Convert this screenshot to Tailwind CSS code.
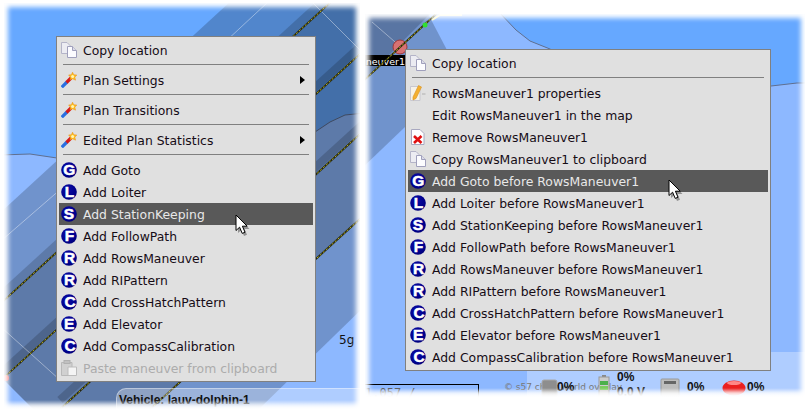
<!DOCTYPE html>
<html><head><meta charset="utf-8">
<script src="https://cdn.jsdelivr.net/npm/@tailwindcss/browser@4"></script>
</head>
<body class="bg-white">
<svg class="absolute w-0 h-0" aria-hidden="true">
<defs>
<radialGradient id="ballg" cx="40%" cy="35%" r="75%"><stop offset="0" stop-color="#0c0ca8"/><stop offset="0.7" stop-color="#00008a"/><stop offset="1" stop-color="#000070"/></radialGradient>
<symbol id="copy" viewBox="0 0 16 16"><path d="M.5 .5H6L9 3.5V11.5H.5Z" fill="#ececf2" stroke="#b4b4c8"/><path d="M6.5 4.5H11.5L15.5 8.5V15.5H6.5Z" fill="#fcfcff" stroke="#a0a0bc"/><path d="M11.5 4.5V8.5H15.5" fill="#dcdce8" stroke="#a0a0bc"/></symbol>
<symbol id="wand" viewBox="0 0 16 16"><path d="M.8 15.2L6 10" stroke="#2a6fe0" stroke-width="3.2"/><path d="M5.5 10.5L10 6" stroke="#d81818" stroke-width="3.2"/><path d="M11.5 .2L12.8 2.8L15.8 3L13.8 5.2L14.6 8.2L11.5 6.8L9 8L9.6 5.2L7.6 3L10.4 2.8Z" fill="#ffc020" stroke="#e88a10" stroke-width=".5"/><circle cx="11.6" cy="4.4" r="1.5" fill="#fff6b0"/></symbol>
<symbol id="edit" viewBox="0 0 16 16"><path d="M.5 1.5H10V15.5H.5Z" fill="#f6f2e8" stroke="#c8c8d0"/><path d="M3 12L8.5 .5L11.5 2L6 13.5L3 15Z" fill="#f4b030" stroke="#d89020" stroke-width=".6"/><path d="M12 9H15.5" stroke="#c8c8c8" stroke-width="2"/></symbol>
<symbol id="del" viewBox="0 0 16 16"><path d="M1.5 .5H10L14 4.5V15.5H1.5Z" fill="#fff" stroke="#a8a8c0"/><path d="M4 7L11.5 14M11.5 7L4 14" stroke="#e01010" stroke-width="2.6"/></symbol>
<symbol id="paste" viewBox="0 0 16 16"><path d="M.5 2.5H11V15.5H.5Z" fill="#d0d0d0" stroke="#b8b8b8"/><rect x="3" y=".5" width="6" height="3" fill="#c0c0c0" stroke="#b0b0b0"/><path d="M7 7H15.5V15.5H7Z" fill="#f4f4f4" stroke="#bcbcbc"/></symbol>
<symbol id="G" viewBox="0 0 16 16"><circle cx="8" cy="8" r="7.8" fill="url(#ballg)"/><text x="8.4" y="13.4" text-anchor="middle" font-family="Liberation Sans" font-weight="700" font-size="15.5" fill="#fff" stroke="#fff" stroke-width=".5">G</text></symbol>
<symbol id="L" viewBox="0 0 16 16"><circle cx="8" cy="8" r="7.8" fill="url(#ballg)"/><text x="8.6" y="13.4" text-anchor="middle" font-family="Liberation Sans" font-weight="700" font-size="15.5" fill="#fff" stroke="#fff" stroke-width=".5">L</text></symbol>
<symbol id="S" viewBox="0 0 16 16"><circle cx="8" cy="8" r="7.8" fill="url(#ballg)"/><text x="8" y="13.4" text-anchor="middle" font-family="Liberation Sans" font-weight="700" font-size="15.5" fill="#fff" stroke="#fff" stroke-width=".5">S</text></symbol>
<symbol id="F" viewBox="0 0 16 16"><circle cx="8" cy="8" r="7.8" fill="url(#ballg)"/><text x="8.6" y="13.4" text-anchor="middle" font-family="Liberation Sans" font-weight="700" font-size="15.5" fill="#fff" stroke="#fff" stroke-width=".5">F</text></symbol>
<symbol id="R" viewBox="0 0 16 16"><circle cx="8" cy="8" r="7.8" fill="url(#ballg)"/><text x="8.6" y="13.4" text-anchor="middle" font-family="Liberation Sans" font-weight="700" font-size="15.5" fill="#fff" stroke="#fff" stroke-width=".5">R</text></symbol>
<symbol id="C" viewBox="0 0 16 16"><circle cx="8" cy="8" r="7.8" fill="url(#ballg)"/><text x="9.2" y="13.4" text-anchor="middle" font-family="Liberation Sans" font-weight="700" font-size="15.5" fill="#fff" stroke="#fff" stroke-width=".5">C</text></symbol>
<symbol id="E" viewBox="0 0 16 16"><circle cx="8" cy="8" r="7.8" fill="url(#ballg)"/><text x="8.2" y="13.4" text-anchor="middle" font-family="Liberation Sans" font-weight="700" font-size="15.5" fill="#fff" stroke="#fff" stroke-width=".5">E</text></symbol>
<symbol id="cursor" viewBox="0 0 16 22"><path d="M3 3V19L6.5 16L9 22L12 20.8L9.5 15H14.5Z" fill="#000" opacity=".35"/><path d="M1 1V16.5L4.6 13.2L7.2 19.4L10 18.2L7.4 12.2H12.2Z" fill="#fff" stroke="#000" stroke-width="1"/></symbol>
</defs>
</svg>

<div class="relative w-[810px] h-[413px] overflow-hidden bg-white font-['DejaVu_Sans',sans-serif] text-[12.4px] text-[#160c16]">

<!-- left window -->
<div class="absolute left-[4px] top-[3px] w-[356px] h-[407px] overflow-hidden">
  <svg class="absolute left-0 top-0" width="356" height="407" viewBox="4 3 356 407">
    <rect x="0" y="0" width="360" height="410" fill="#66a8ff"/>
    <path d="M0 155L30 154L57 158L315 132L330 122L345 115L365 113V415H0Z" fill="#8db8ff" stroke="#5f6f90" stroke-width="1"/>
    <path d="M232 0H365V306L258 410H34L0 376V213Z" fill="#000" fill-opacity=".2"/>
    <path d="M318 0H365V215L150 410H34L0 376V291Z" fill="#000" fill-opacity=".17"/>
    <g fill="none" stroke="#000" stroke-opacity=".17" stroke-width="8">
      <path d="M365 42L0 374"/><path d="M365 122L60 400"/>
    </g>
    <g fill="none" stroke="#fff" stroke-opacity=".4" stroke-width="1">
      <path d="M268 2L225 42"/><path d="M62 188L2 240"/><path d="M312 2L360 50"/><path d="M2 328L60 380"/>
    </g>
    <g fill="none" stroke="#26260c" stroke-width="1.8">
      <path d="M333 0L0 304"/><path d="M360 54L0 381"/><path d="M360 134L57 412"/><path d="M360 219L147 412"/>
    </g>
    <g fill="none" stroke="#e0d820" stroke-width=".8" stroke-dasharray="2 2">
      <path d="M333 0L0 304"/><path d="M360 54L0 381"/><path d="M360 134L57 412"/><path d="M360 219L147 412"/>
    </g>
    <circle cx="6" cy="378" r="3" fill="#f07070"/>
  </svg>
  <div class="absolute left-[112px] top-[385px] w-[260px] h-[40px] rounded-tl-[10px] bg-white/30 border-t border-l border-white/40"></div>
  <span class="absolute left-[115px] top-[390px] font-['Liberation_Sans',sans-serif] font-bold text-[12px] leading-[14px] text-[#111]">Vehicle: lauv-dolphin-1</span>
  <span class="absolute left-[335px] top-[330px] text-[12px] leading-[14px] text-[#111]">5g</span>
  <div class="absolute inset-0 shadow-[inset_0_0_5px_4px_#fff]"></div>
  <div class="absolute left-0 right-0 bottom-0 h-[10px] bg-linear-to-t from-white via-white/60 to-white/0"></div>
</div>

<!-- left menu -->
<div class="absolute left-[56px] top-[36px] w-[260px] border border-[#808080] bg-[#e0e0e0] p-[2px] [&_span]:mt-[2px]">
  <div class="flex h-[22px] items-center gap-[6px] pl-[2px]"><svg class="w-4 h-4"><use href="#copy"/></svg><span>Copy location</span></div>
  <div class="h-[8px] pt-[3px] px-[4px]"><div class="h-px bg-[#808080]"></div></div>
  <div class="flex h-[22px] items-center gap-[6px] pl-[2px] pr-[8px]"><svg class="w-4 h-4"><use href="#wand"/></svg><span class="flex-1">Plan Settings</span><div class="w-0 h-0 border-y-[4px] border-y-transparent border-l-[5px] border-l-black"></div></div>
  <div class="h-[8px] pt-[3px] px-[4px]"><div class="h-px bg-[#808080]"></div></div>
  <div class="flex h-[22px] items-center gap-[6px] pl-[2px]"><svg class="w-4 h-4"><use href="#wand"/></svg><span>Plan Transitions</span></div>
  <div class="h-[8px] pt-[3px] px-[4px]"><div class="h-px bg-[#808080]"></div></div>
  <div class="flex h-[22px] items-center gap-[6px] pl-[2px] pr-[8px]"><svg class="w-4 h-4"><use href="#wand"/></svg><span class="flex-1">Edited Plan Statistics</span><div class="w-0 h-0 border-y-[4px] border-y-transparent border-l-[5px] border-l-black"></div></div>
  <div class="h-[8px] pt-[3px] px-[4px]"><div class="h-px bg-[#808080]"></div></div>
  <div class="flex h-[22px] items-center gap-[6px] pl-[2px]"><svg class="w-4 h-4"><use href="#G"/></svg><span>Add Goto</span></div>
  <div class="flex h-[22px] items-center gap-[6px] pl-[2px]"><svg class="w-4 h-4"><use href="#L"/></svg><span>Add Loiter</span></div>
  <div class="flex h-[22px] items-center gap-[6px] pl-[2px] bg-[#595959] text-[#e8e8e8]"><svg class="w-4 h-4"><use href="#S"/></svg><span>Add StationKeeping</span></div>
  <div class="flex h-[22px] items-center gap-[6px] pl-[2px]"><svg class="w-4 h-4"><use href="#F"/></svg><span>Add FollowPath</span></div>
  <div class="flex h-[22px] items-center gap-[6px] pl-[2px]"><svg class="w-4 h-4"><use href="#R"/></svg><span>Add RowsManeuver</span></div>
  <div class="flex h-[22px] items-center gap-[6px] pl-[2px]"><svg class="w-4 h-4"><use href="#R"/></svg><span>Add RIPattern</span></div>
  <div class="flex h-[22px] items-center gap-[6px] pl-[2px]"><svg class="w-4 h-4"><use href="#C"/></svg><span>Add CrossHatchPattern</span></div>
  <div class="flex h-[22px] items-center gap-[6px] pl-[2px]"><svg class="w-4 h-4"><use href="#E"/></svg><span>Add Elevator</span></div>
  <div class="flex h-[22px] items-center gap-[6px] pl-[2px]"><svg class="w-4 h-4"><use href="#C"/></svg><span>Add CompassCalibration</span></div>
  <div class="flex h-[22px] items-center gap-[6px] pl-[2px] text-[#acacac]"><svg class="w-4 h-4"><use href="#paste"/></svg><span>Paste maneuver from clipboard</span></div>
</div>
<svg class="absolute left-[235px] top-[214px]" width="16" height="22"><use href="#cursor"/></svg>

<!-- right window -->
<div class="absolute left-[365px] top-[14px] w-[440px] h-[384px] overflow-hidden">
  <svg class="absolute left-0 top-0" width="440" height="384" viewBox="365 14 440 384">
    <rect x="360" y="0" width="450" height="410" fill="#66a8ff"/>
    <path d="M360 10H497L516 30L530 41L550 49L600 80L771 86L797 83H810V410H360Z" fill="#8db8ff" stroke="#5f6f90" stroke-width="1"/>
    <path d="M360 10H426L447 50L405 127L360 170Z" fill="#000" fill-opacity=".2"/>
    <path d="M360 10H434L360 84Z" fill="#000" fill-opacity=".2"/>
    <path d="M372 22L402 48" stroke="#fff" stroke-opacity=".4"/>
    <circle cx="400" cy="47" r="7" fill="#d87272" stroke="#a03838"/>
    <rect x="360" y="55" width="46" height="11" fill="#000"/>
    <text x="405" y="65" text-anchor="end" font-family="DejaVu Sans" font-size="9.5" fill="#fff">neuver1</text>
    <path d="M436 14L360 84" stroke="#26260c" stroke-width="1.8"/>
    <path d="M436 14L360 84" stroke="#e0d820" stroke-width=".8" stroke-dasharray="2 2"/>
    <circle cx="425" cy="25" r="2.5" fill="#30e030"/>
    <path d="M432 20L440 15H462" stroke="#fff8c0" stroke-width="2" fill="none"/>
    <rect x="527" y="352" width="283" height="60" fill="#fff" fill-opacity=".3"/>
  </svg>
  <div class="absolute left-[-4px] top-[370px] w-[118px] h-[20px] border-t border-r border-black pl-[4px] font-['DejaVu_Sans_Mono',monospace] text-[12px] leading-[16px] text-[#555]">1.057 / 8W42.349</div>
  <span class="absolute left-[139px] top-[368px] text-[9px] leading-[11px] text-[#777] whitespace-nowrap">© s57 chart world overlay</span>
  <svg class="absolute left-[176px] top-[363px]" width="18" height="22"><rect x="1" y="3" width="15" height="18" rx="2" fill="#8e8e8e" stroke="#a8a8a8"/></svg>
  <span class="absolute left-[192px] top-[366px] font-['Liberation_Sans',sans-serif] font-bold text-[12px] leading-[14px] text-[#111]">0%</span>
  <svg class="absolute left-[233px] top-[360px]" width="12" height="24"><rect x="4" y="1" width="4" height="2" fill="#888"/><rect x="1" y="3" width="10" height="20" fill="#ccc" stroke="#999"/><rect x="2" y="7" width="8" height="4" fill="#4cb04c"/><rect x="2" y="12" width="8" height="4" fill="#7ccc60"/></svg>
  <span class="absolute left-[252px] top-[356px] font-['Liberation_Sans',sans-serif] font-bold text-[12px] leading-[14px] text-[#111]">0%</span>
  <span class="absolute left-[252px] top-[371px] font-['Liberation_Sans',sans-serif] font-bold text-[12px] leading-[14px] text-[#333]">0.0 V</span>
  <svg class="absolute left-[294px] top-[363px]" width="22" height="22"><rect x="2" y="2" width="18" height="18" rx="1" fill="#bdbdbd" stroke="#999"/><rect x="5" y="4" width="12" height="3" fill="#666"/></svg>
  <span class="absolute left-[322px] top-[366px] font-['Liberation_Sans',sans-serif] font-bold text-[12px] leading-[14px] text-[#111]">0%</span>
  <svg class="absolute left-[357px] top-[365px]" width="24" height="20"><ellipse cx="12" cy="9" rx="11.5" ry="7.5" fill="#ea2020"/><ellipse cx="12" cy="4" rx="7" ry="2" fill="#f88"/></svg>
  <span class="absolute left-[382px] top-[366px] font-['Liberation_Sans',sans-serif] font-bold text-[12px] leading-[14px] text-[#111]">0%</span>
  <div class="absolute inset-0 shadow-[inset_0_0_5px_4px_#fff]"></div>
  <div class="absolute left-0 right-0 bottom-0 h-[10px] bg-linear-to-t from-white via-white/70 to-white/0"></div>
</div>

<!-- right menu -->
<div class="absolute left-[405px] top-[49px] w-[366px] border border-[#808080] bg-[#e0e0e0] p-[2px] [&_span]:mt-[2px]">
  <div class="flex h-[22px] items-center gap-[6px] pl-[2px]"><svg class="w-4 h-4"><use href="#copy"/></svg><span>Copy location</span></div>
  <div class="h-[8px] pt-[3px] px-[4px]"><div class="h-px bg-[#808080]"></div></div>
  <div class="flex h-[22px] items-center gap-[6px] pl-[2px]"><svg class="w-4 h-4"><use href="#edit"/></svg><span>RowsManeuver1 properties</span></div>
  <div class="flex h-[22px] items-center gap-[6px] pl-[2px]"><div class="w-4 h-4"></div><span>Edit RowsManeuver1 in the map</span></div>
  <div class="flex h-[22px] items-center gap-[6px] pl-[2px]"><svg class="w-4 h-4"><use href="#del"/></svg><span>Remove RowsManeuver1</span></div>
  <div class="flex h-[22px] items-center gap-[6px] pl-[2px]"><svg class="w-4 h-4"><use href="#copy"/></svg><span>Copy RowsManeuver1 to clipboard</span></div>
  <div class="flex h-[22px] items-center gap-[6px] pl-[2px] bg-[#595959] text-[#e8e8e8]"><svg class="w-4 h-4"><use href="#G"/></svg><span>Add Goto before RowsManeuver1</span></div>
  <div class="flex h-[22px] items-center gap-[6px] pl-[2px]"><svg class="w-4 h-4"><use href="#L"/></svg><span>Add Loiter before RowsManeuver1</span></div>
  <div class="flex h-[22px] items-center gap-[6px] pl-[2px]"><svg class="w-4 h-4"><use href="#S"/></svg><span>Add StationKeeping before RowsManeuver1</span></div>
  <div class="flex h-[22px] items-center gap-[6px] pl-[2px]"><svg class="w-4 h-4"><use href="#F"/></svg><span>Add FollowPath before RowsManeuver1</span></div>
  <div class="flex h-[22px] items-center gap-[6px] pl-[2px]"><svg class="w-4 h-4"><use href="#R"/></svg><span>Add RowsManeuver before RowsManeuver1</span></div>
  <div class="flex h-[22px] items-center gap-[6px] pl-[2px]"><svg class="w-4 h-4"><use href="#R"/></svg><span>Add RIPattern before RowsManeuver1</span></div>
  <div class="flex h-[22px] items-center gap-[6px] pl-[2px]"><svg class="w-4 h-4"><use href="#C"/></svg><span>Add CrossHatchPattern before RowsManeuver1</span></div>
  <div class="flex h-[22px] items-center gap-[6px] pl-[2px]"><svg class="w-4 h-4"><use href="#E"/></svg><span>Add Elevator before RowsManeuver1</span></div>
  <div class="flex h-[22px] items-center gap-[6px] pl-[2px]"><svg class="w-4 h-4"><use href="#C"/></svg><span>Add CompassCalibration before RowsManeuver1</span></div>
</div>
<svg class="absolute left-[668px] top-[179px]" width="16" height="22"><use href="#cursor"/></svg>

</div>
</body></html>
